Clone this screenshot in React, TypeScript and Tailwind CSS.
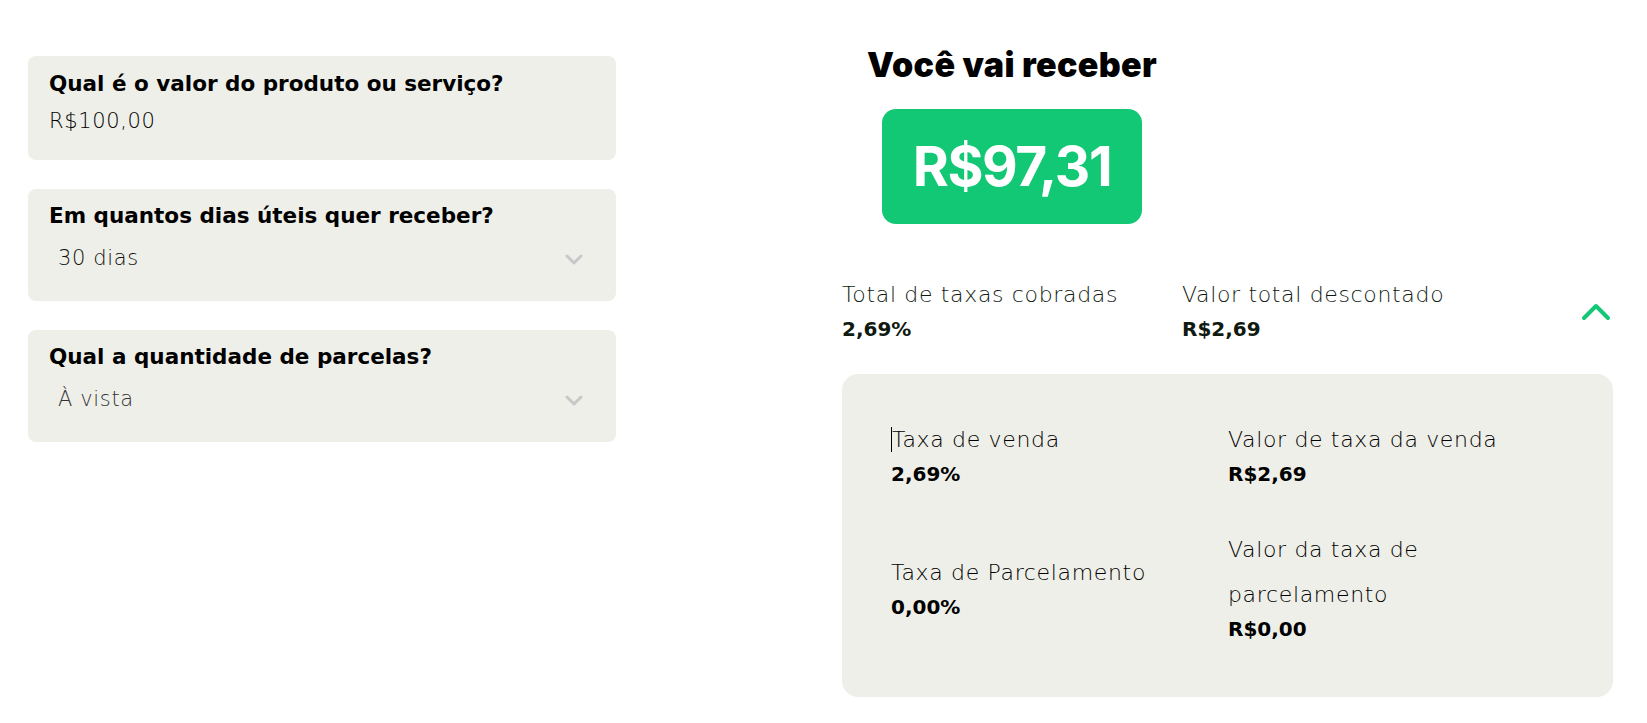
const body = "font-['DejaVu_Sans',sans-serif]";
const label = "text-[22px] leading-[45px] font-extralight tracking-[0.03em]";
const amount = "text-[20px] leading-[24px] font-bold";

function ChevronDownIcon() {
  return (
    <svg width="18" height="11" viewBox="0 0 18 11" fill="none" className="shrink-0">
      <path d="M2 2l7 7 7-7" stroke="#c8c8c8" strokeWidth="3" strokeLinecap="round" strokeLinejoin="round" />
    </svg>
  );
}

function SelectCard({ title, value, muted }: { title: string; value: string; muted?: boolean }) {
  return (
    <div className="rounded-[8px] bg-[#efefe9] px-[21px] pt-[13px] pb-[18px]">
      <p className="text-[21.5px] leading-[28px] font-bold text-black">{title}</p>
      <div className="mt-[5px] flex h-[48px] items-center justify-between pl-[9px] pr-[12px]">
        <span className={`text-[21px] font-extralight tracking-[0.03em] ${muted ? "text-[#333]" : "text-[#111]"}`}>{value}</span>
        <ChevronDownIcon />
      </div>
    </div>
  );
}

function Stat({ name, value }: { name: string; value: string }) {
  return (
    <div className="w-[340px]">
      <p className={label}>{name}</p>
      <p className={amount}>{value}</p>
    </div>
  );
}

export default function App() {
  return (
    <div className={`flex min-h-[723px] bg-white pl-[28px] pt-[44px] ${body}`}>
      {/* form */}
      <div className="mt-[12px] flex w-[588px] flex-col gap-[29px]">
        <div className="rounded-[8px] bg-[#efefe9] px-[21px] pt-[14px] pb-[25px]">
          <p className="text-[21.5px] leading-[28px] font-bold text-black">Qual é o valor do produto ou serviço?</p>
          <p className="mt-[9px] text-[21px] leading-[28px] font-extralight tracking-[0.03em] text-black">R$100,00</p>
        </div>
        <SelectCard title="Em quantos dias úteis quer receber?" value="30 dias" />
        <SelectCard title="Qual a quantidade de parcelas?" value="À vista" muted />
      </div>

      {/* result */}
      <div className="ml-[226px] w-[771px]">
        <div className="flex w-[340px] flex-col items-center">
          <h2 className="font-['Inter',sans-serif] text-[34px] leading-[42px] font-black tracking-[0.01em] text-black">
            Você vai receber
          </h2>
          <div className="mt-[23px] flex h-[115px] w-[260px] items-center justify-center rounded-[14px] bg-[#12c874]">
            <span className="font-['Inter',sans-serif] text-[55px] font-bold tracking-[-0.025em] text-white">R$97,31</span>
          </div>
        </div>

        <div className="mt-[48px] flex items-center text-[#0f1a10]">
          <Stat name="Total de taxas cobradas" value="2,69%" />
          <Stat name="Valor total descontado" value="R$2,69" />
          <svg width="30" height="18" viewBox="0 0 30 18" fill="none" className="ml-auto mr-[2px] mt-[10px]">
            <path d="M3 15L15 3l12 12" stroke="#12c874" strokeWidth="4" strokeLinecap="round" strokeLinejoin="round" />
          </svg>
        </div>

        <div className="mt-[33px] grid grid-cols-[337px_1fr] items-center gap-y-[41px] rounded-[16px] bg-[#efefe9] pt-[43px] pb-[56px] pl-[49px] text-black">
          <div>
            <p className={label}>
              <span className="border-l border-black">Taxa de venda</span>
            </p>
            <p className={amount}>2,69%</p>
          </div>
          <div>
            <p className={label}>Valor de taxa da venda</p>
            <p className={amount}>R$2,69</p>
          </div>
          <div>
            <p className={label}>Taxa de Parcelamento</p>
            <p className={amount}>0,00%</p>
          </div>
          <div>
            <p className={`w-[210px] ${label}`}>Valor da taxa de parcelamento</p>
            <p className={amount}>R$0,00</p>
          </div>
        </div>
      </div>
    </div>
  );
}
